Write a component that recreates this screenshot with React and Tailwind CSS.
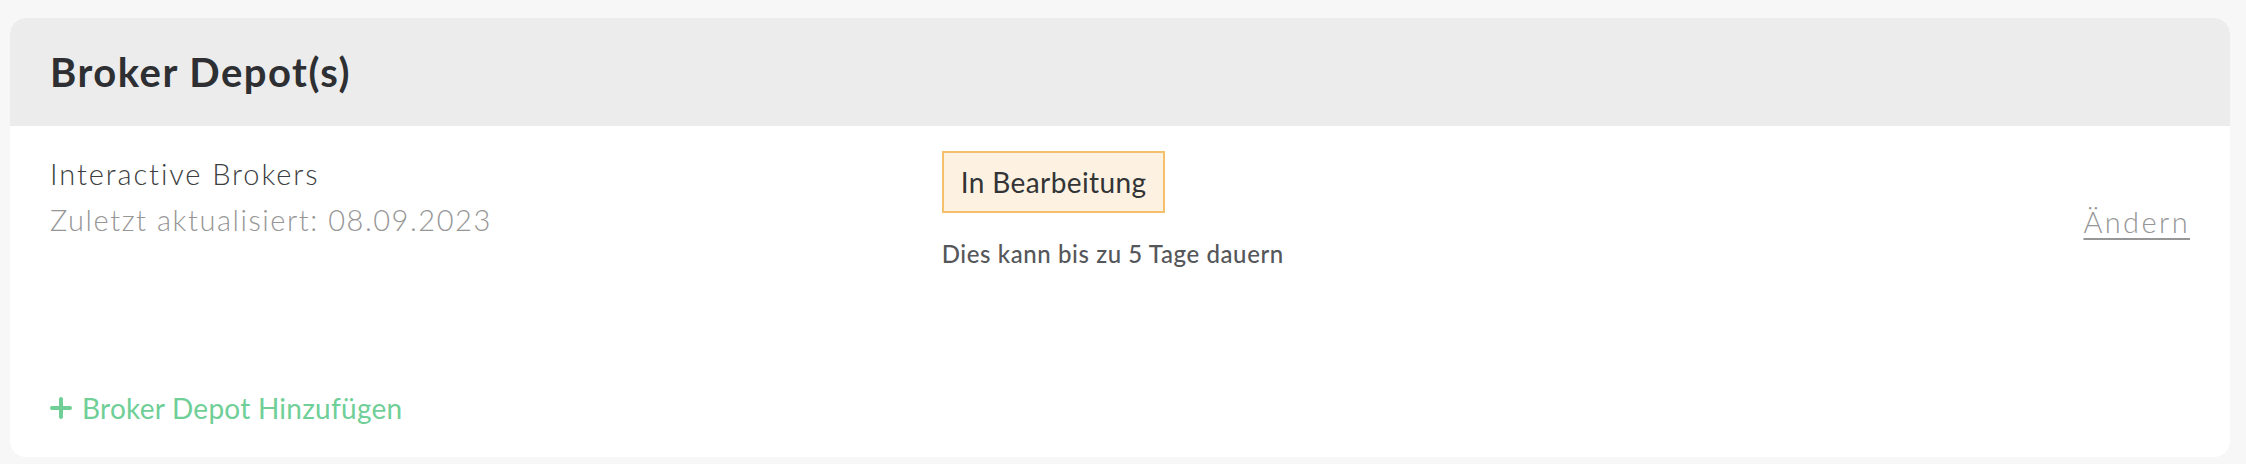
export default function App() {
  return (
    <div className="min-h-screen bg-[#f7f7f7] pl-[10px] pr-[16px] pt-[18px] font-['Lato',sans-serif]">
      <div className="overflow-hidden rounded-[16px] bg-white">
        {/* Header */}
        <div className="flex h-[108px] items-center bg-[#ececec] px-10">
          <h2 className="text-[40px] font-bold leading-none tracking-[1.5px] text-[#2d2f32]">Broker Depot(s)</h2>
        </div>

        {/* Body */}
        <div className="px-10 pt-[25px] pb-[28px]">
          <div className="grid grid-cols-12">
            <div className="col-span-5">
              <p className="text-[29px] font-light leading-[46px] tracking-[1.9px] text-[#3c3e41]">Interactive Brokers</p>
              <p className="text-[29px] font-light leading-[46px] tracking-[1.55px] text-[#969696]">
                Zuletzt aktualisiert: 08.09.2023
              </p>
            </div>
            <div className="col-span-5">
              <span className="inline-block border-2 border-[#f5c06b] bg-[#fdf2e1] px-[17px] py-[8px] text-[28px] leading-[42px] tracking-[0.4px] text-[#333436]">
                In Bearbeitung
              </span>
              <p className="mt-[23px] text-[24px] font-medium leading-[36px] tracking-[0.6px] text-[#55575a]">
                Dies kann bis zu 5 Tage dauern
              </p>
            </div>
            <div className="col-span-2 flex justify-end pt-[50px]">
              <a
                href="#"
                className="h-fit text-[29px] font-light leading-[42px] tracking-[2.4px] text-[#969696] underline decoration-2 underline-offset-[5px]"
              >
                Ändern
              </a>
            </div>
          </div>

          <button className="mt-[115px] flex items-center gap-[10px] text-[28px] leading-[42px] tracking-[0.25px] text-[#6fcf97]">
            <svg width="22" height="22" viewBox="0 0 22 22" fill="none">
              <path d="M11 2v18M2 11h18" stroke="currentColor" strokeWidth="4" strokeLinecap="round" />
            </svg>
            Broker Depot Hinzufügen
          </button>
        </div>
      </div>
    </div>
  )
}
